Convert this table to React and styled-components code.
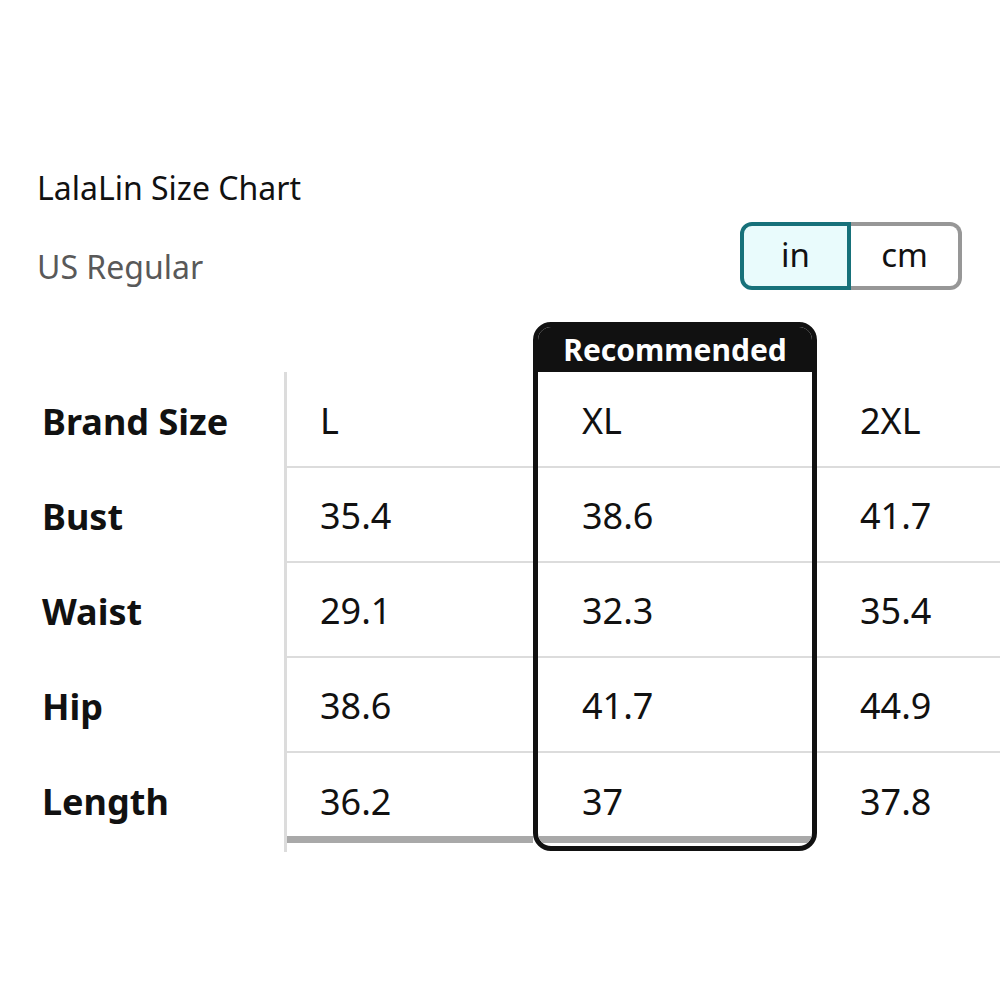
import React, { useState } from 'react';
import styled, { createGlobalStyle } from 'styled-components';

const GlobalStyle = createGlobalStyle`
  html, body {
    margin: 0;
    padding: 0;
    background: #ffffff;
  }
  body {
    font-family: "Noto Sans", "Open Sans", Arial, sans-serif;
    color: #111111;
  }
`;

const Page = styled.div`
  width: 1000px;
  height: 1000px;
  box-sizing: border-box;
  padding-top: 168px;
  overflow: hidden;
  background: #ffffff;
`;

const Header = styled.div`
  padding: 0 38px 0 37px;
`;

const Title = styled.div`
  font-size: 32px;
  line-height: 40px;
  color: #111111;
`;

const SubRow = styled.div`
  display: flex;
  justify-content: space-between;
  align-items: center;
  margin-top: 14px;
`;

const Subtitle = styled.div`
  font-size: 32px;
  line-height: 40px;
  color: #595959;
  margin-top: 22px;
`;

const Toggle = styled.div`
  display: flex;
  height: 68px;
`;

const ToggleButton = styled.button`
  width: 111px;
  height: 68px;
  box-sizing: border-box;
  font-family: inherit;
  font-size: 33px;
  color: #111111;
  cursor: pointer;
  padding: 0 0 4px;
  background: ${(p) => (p.active ? '#e9fbfc' : '#ffffff')};
  border: 4px solid ${(p) => (p.active ? '#17717a' : '#979797')};
  border-radius: ${(p) => (p.side === 'left' ? '12px 0 0 12px' : '0 12px 12px 0')};
  ${(p) => (p.side === 'right' ? 'border-left: none;' : '')}
`;

const Table = styled.div`
  display: flex;
  margin-top: 32px;
`;

const Column = styled.div`
  display: flex;
  flex-direction: column;
  width: ${(p) => p.width}px;
  box-sizing: border-box;
  margin-top: 50px;
`;

const LabelColumn = styled(Column)`
  padding-left: 42px;
`;

const LeftRule = styled(Column)`
  border-left: 3px solid #dcdcdc;
  padding-bottom: 9px;
`;

const RecommendedBox = styled.div`
  display: flex;
  flex-direction: column;
  width: 284px;
  box-sizing: border-box;
  border: 5px solid #111111;
  border-radius: 18px;
  overflow: hidden;
  height: 529px;
`;

const RecommendedHead = styled.div`
  height: 45px;
  background: #111111;
  color: #ffffff;
  font-weight: 700;
  font-size: 30px;
  line-height: 45px;
  text-align: center;
  padding-bottom: 2px;
  box-sizing: border-box;
`;

const Cell = styled.div`
  display: flex;
  align-items: center;
  box-sizing: border-box;
  height: ${(p) => p.h}px;
  padding-left: ${(p) => p.pad || 0}px;
  padding-top: ${(p) => (p.last ? 14 : 2)}px;
  font-size: 36px;
  font-weight: ${(p) => (p.bold ? 700 : 400)};
  border-bottom: ${(p) => (p.line ? '2px solid #dcdcdc' : 'none')};
  white-space: nowrap;
`;

const Bar = styled.div`
  height: 7px;
  background: #a9a9a9;
`;

const rows = [
  { label: 'Brand Size', values: ['L', 'XL', '2XL'] },
  { label: 'Bust', values: ['35.4', '38.6', '41.7'] },
  { label: 'Waist', values: ['29.1', '32.3', '35.4'] },
  { label: 'Hip', values: ['38.6', '41.7', '44.9'] },
  { label: 'Length', values: ['36.2', '37', '37.8'] },
];

const heightFor = (i) => (i === 0 ? 96 : i === rows.length - 1 ? 83 : 95);

const renderCells = (col, pad, bold) =>
  rows.map((r, i) => (
    <Cell
      key={r.label}
      h={heightFor(i)}
      pad={pad}
      bold={bold}
      last={i === rows.length - 1}
      line={col >= 0 && i < rows.length - 1}
    >
      {col < 0 ? r.label : r.values[col]}
    </Cell>
  ));

export default function App() {
  const [unit, setUnit] = useState('in');

  return (
    <Page>
      <GlobalStyle />
      <Header>
        <Title>LalaLin Size Chart</Title>
        <SubRow>
          <Subtitle>US Regular</Subtitle>
          <Toggle>
            <ToggleButton side="left" active={unit === 'in'} onClick={() => setUnit('in')}>
              in
            </ToggleButton>
            <ToggleButton side="right" active={unit === 'cm'} onClick={() => setUnit('cm')}>
              cm
            </ToggleButton>
          </Toggle>
        </SubRow>
      </Header>

      <Table>
        <LabelColumn width={284}>{renderCells(-1, 0, true)}</LabelColumn>
        <LeftRule width={249}>
          {renderCells(0, 33)}
          <Bar />
        </LeftRule>
        <RecommendedBox>
          <RecommendedHead>Recommended</RecommendedHead>
          {renderCells(1, 44)}
          <Bar />
        </RecommendedBox>
        <Column width={183}>{renderCells(2, 43)}</Column>
      </Table>
    </Page>
  );
}
